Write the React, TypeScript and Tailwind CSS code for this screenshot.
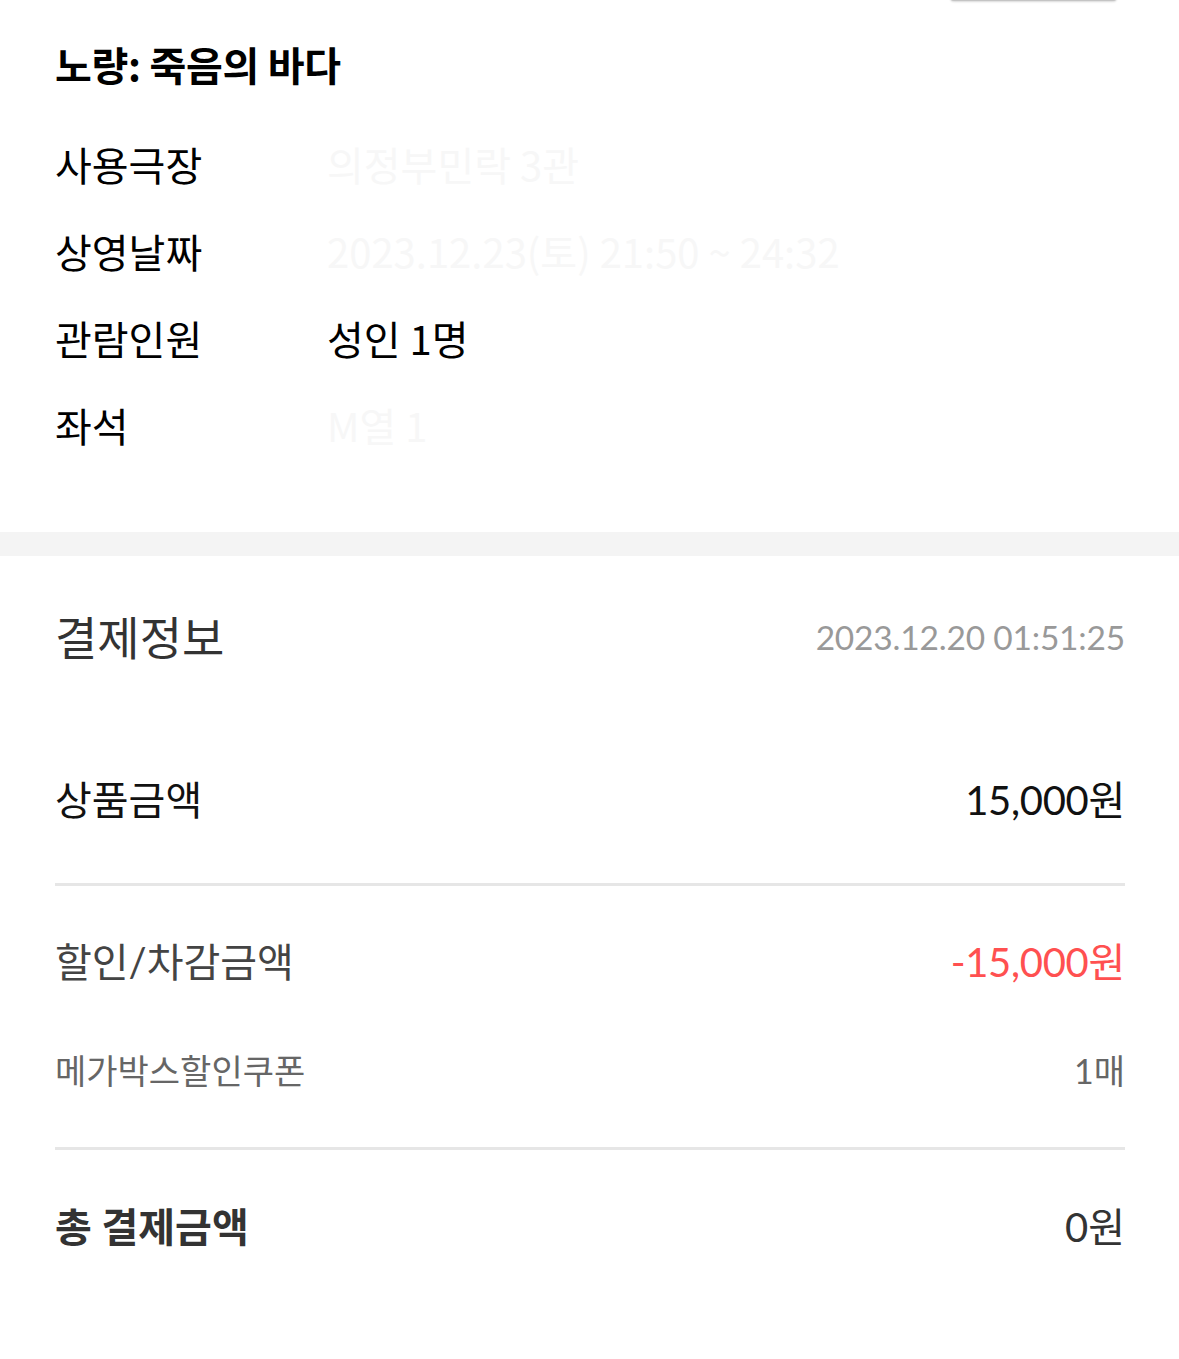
const KR = "font-['Noto_Sans_CJK_KR',sans-serif]";
const NUM = "font-['Lato','Noto_Sans_CJK_KR',sans-serif]";

const INFO = [
  { label: "사용극장", value: "의정부민락 3관", faded: true },
  { label: "상영날짜", value: "2023.12.23(토) 21:50 ~ 24:32", faded: true },
  { label: "관람인원", value: "성인 1명", faded: false },
  { label: "좌석", value: "M열 1", faded: true },
];

export default function App() {
  return (
    <div className={`relative w-[1179px] min-h-[1359px] bg-white overflow-hidden ${KR}`}>
      {/* handle poking in at the top */}
      <div className="absolute -top-[7px] right-[62px] h-[8px] w-[167px] rounded-full bg-[#c4c4c4] shadow-[0_1px_2px_rgba(0,0,0,0.15)]" />

      {/* Movie info */}
      <div className="px-[55px] pt-[40px] pb-[64px]">
        <h1 className="h-[48px] leading-[48px] text-[40px] font-bold text-black tracking-[-0.3px]">
          노량: 죽음의 바다
        </h1>
        <div className="mt-[32px]">
          {INFO.map((row) => (
            <div key={row.label} className="flex h-[87px] items-center text-[40px]">
              <span className="w-[272px] shrink-0 text-black">{row.label}</span>
              <span className={row.faded ? "text-[#f7f7f7]" : "text-black"}>{row.value}</span>
            </div>
          ))}
        </div>
      </div>

      <div className="h-[24px] bg-[#f4f4f4]" />

      {/* Payment info */}
      <div className={`pl-[55px] pr-[54px] pt-[51px] pb-[108px] ${NUM}`}>
        <div className="flex h-[60px] items-center justify-between">
          <h2 className="text-[46px] text-[#333]">결제정보</h2>
          <span className="text-[33.5px] text-[#999] tracking-[-0.2px]">2023.12.20 01:51:25</span>
        </div>

        <div className="mt-[109px] flex h-[48px] items-center justify-between text-[40px] text-[#111]">
          <span>상품금액</span>
          <span className="tracking-[-0.3px]">15,000원</span>
        </div>

        <div className="mt-[59px] h-[3px] bg-[#e6e6e6]" />

        <div className="mt-[52px] flex h-[48px] items-center justify-between text-[40px]">
          <span className="text-[#444]">할인/차감금액</span>
          <span className="text-[#ff5050] tracking-[-0.3px]">-15,000원</span>
        </div>

        <div className="mt-[64px] flex h-[40px] items-center justify-between text-[34px] text-[#666]">
          <span>메가박스할인쿠폰</span>
          <span>1매</span>
        </div>

        <div className="mt-[57px] h-[3px] bg-[#e6e6e6]" />

        <div className="mt-[53px] flex h-[48px] items-center justify-between text-[40px] text-[#333]">
          <span className="font-bold">총 결제금액</span>
          <span>0원</span>
        </div>
      </div>
    </div>
  );
}
